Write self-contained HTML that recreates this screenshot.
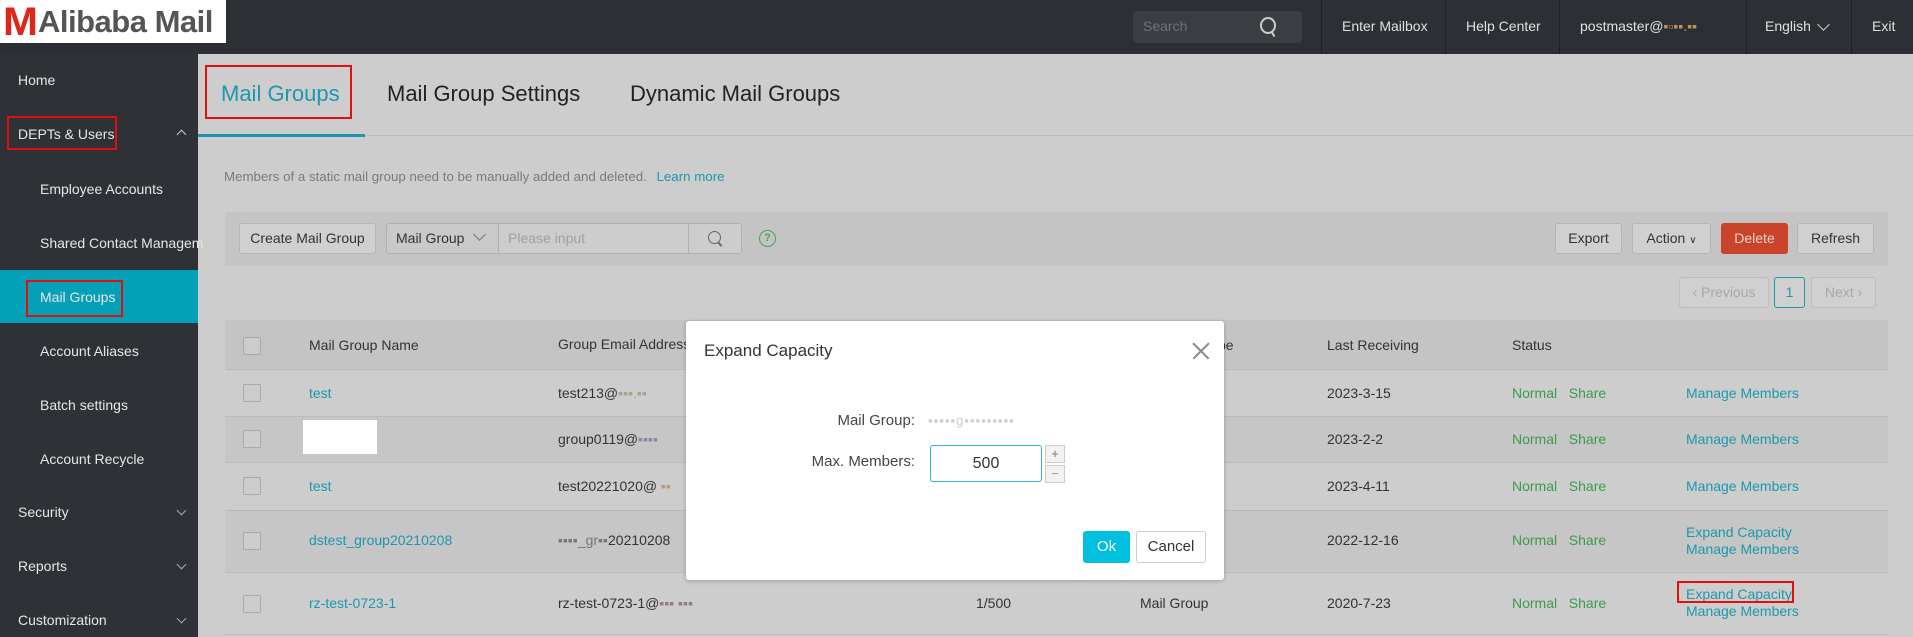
<!DOCTYPE html>
<html><head><meta charset="utf-8"><style>
*{margin:0;padding:0;box-sizing:border-box}
body{width:1913px;height:637px;overflow:hidden;background:#cdcdcd;font-family:"Liberation Sans",Arial,sans-serif;position:relative;color:#333}
.a{position:absolute;white-space:nowrap}
.hdr{left:0;top:0;width:1913px;height:54px;background:#2c3034}
.side{left:0;top:54px;width:198px;height:583px;background:#2e3236}
.nav{color:#e6e6e6;font-size:14px}
.hn{color:#e0e0e0;font-size:14px;top:18px}
.sep{top:0;width:1px;height:54px;background:#1e2124}
.btn{border:1px solid #b4b4b4;background:#d0d0d0;border-radius:3px;font-size:14px;color:#333;text-align:center;line-height:29px;height:31px}
.cb{width:18px;height:18px;border:1px solid #a8a8a8;border-radius:2px;background:#cdcdcd}
.lk{color:#1b98ad;font-size:14px}
.gr{color:#3d9a4a;font-size:14px}
.tx{font-size:14px;color:#333}
.red{border:2px solid #e01010}
</style></head><body>
<div class="a hdr"></div>
<div class="a" style="left:0;top:0;width:226px;height:43px;background:#fff"></div>
<div class="a" style="left:3px;top:0px;font:bold 40px 'Liberation Sans',sans-serif;color:#e0261c;transform:scaleX(1.05);transform-origin:left">M</div>
<div class="a" style="left:38px;top:4px;font:bold 31px 'Liberation Sans',sans-serif;color:#555;letter-spacing:-0.5px">Alibaba Mail</div>
<div class="a" style="left:1133px;top:11px;width:169px;height:32px;background:#3a3e43;border-radius:4px"></div>
<div class="a" style="left:1143px;top:18px;font-size:14px;color:#6d7277">Search</div>
<div class="a" style="left:1260px;top:17px;width:16px;height:17px;border:2px solid #ccc;border-radius:50%"></div>
<div class="a" style="left:1272px;top:31px;width:2px;height:6px;background:#ccc;transform:rotate(-30deg)"></div>
<div class="a sep" style="left:1321px"></div><div class="a sep" style="left:1445px"></div><div class="a sep" style="left:1559px"></div><div class="a sep" style="left:1746px"></div><div class="a sep" style="left:1851px"></div>
<div class="a hn" style="left:1342px">Enter Mailbox</div>
<div class="a hn" style="left:1466px">Help Center</div>
<div class="a hn" style="left:1580px">postmaster@<span style="color:#b89560">▪▫▪▪.▪▪</span></div>
<div class="a hn" style="left:1765px">English</div>
<div class="a" style="left:1819px;top:20px;width:9px;height:9px;border-right:1.5px solid #ccc;border-bottom:1.5px solid #ccc;transform:rotate(45deg)"></div>
<div class="a hn" style="left:1872px">Exit</div>

<div class="a side"></div>
<div class="a" style="left:0;top:270px;width:198px;height:53px;background:#04a0b7"></div>
<div class="a nav" style="left:18px;top:72px">Home</div>
<div class="a nav" style="left:18px;top:126px">DEPTs &amp; Users</div>
<div class="a red" style="left:7px;top:116px;width:110px;height:34px"></div>
<div class="a" style="left:178px;top:131px;width:7px;height:7px;border-left:1.5px solid #ccc;border-top:1.5px solid #ccc;transform:rotate(45deg)"></div>
<div class="a nav" style="left:40px;top:181px">Employee Accounts</div>
<div class="a nav" style="left:40px;top:235px">Shared Contact Managem</div>
<div class="a nav" style="left:40px;top:289px">Mail Groups</div>
<div class="a red" style="left:26px;top:280px;width:97px;height:37px"></div>
<div class="a nav" style="left:40px;top:343px">Account Aliases</div>
<div class="a nav" style="left:40px;top:397px">Batch settings</div>
<div class="a nav" style="left:40px;top:451px">Account Recycle</div>
<div class="a nav" style="left:18px;top:504px">Security</div>
<div class="a nav" style="left:18px;top:558px">Reports</div>
<div class="a nav" style="left:18px;top:612px">Customization</div>
<div class="a" style="left:178px;top:507px;width:7px;height:7px;border-right:1.5px solid #aaa;border-bottom:1.5px solid #aaa;transform:rotate(45deg)"></div>
<div class="a" style="left:178px;top:561px;width:7px;height:7px;border-right:1.5px solid #aaa;border-bottom:1.5px solid #aaa;transform:rotate(45deg)"></div>
<div class="a" style="left:178px;top:615px;width:7px;height:7px;border-right:1.5px solid #aaa;border-bottom:1.5px solid #aaa;transform:rotate(45deg)"></div>

<!-- tabs -->
<div class="a" style="left:198px;top:135px;width:1715px;height:1px;background:#bdbdbd"></div>
<div class="a" style="left:198px;top:134px;width:167px;height:3px;background:#1b98ad"></div>
<div class="a" style="left:221px;top:81px;font-size:22px;color:#1b98ad">Mail Groups</div>
<div class="a red" style="left:205px;top:65px;width:147px;height:54px"></div>
<div class="a" style="left:387px;top:81px;font-size:22px;color:#222">Mail Group Settings</div>
<div class="a" style="left:630px;top:81px;font-size:22px;color:#222">Dynamic Mail Groups</div>
<div class="a" style="left:224px;top:169px;font-size:13.3px;color:#7a7a7a">Members of a static mail group need to be manually added and deleted. <span style="color:#1b98ad;margin-left:6px">Learn more</span></div>

<!-- toolbar -->
<div class="a" style="left:225px;top:212px;width:1663px;height:54px;background:#c4c4c4"></div>
<div class="a btn" style="left:239px;top:223px;width:137px">Create Mail Group</div>
<div class="a" style="left:386px;top:223px;width:356px;height:31px;border:1px solid #b0b0b0;border-radius:3px;background:#cdcdcd"></div>
<div class="a" style="left:386px;top:223px;width:113px;height:31px;border:1px solid #b0b0b0;border-radius:3px 0 0 3px;background:#c9c9c9"></div>
<div class="a tx" style="left:396px;top:230px">Mail Group</div>
<div class="a" style="left:475px;top:230px;width:9px;height:9px;border-right:1.5px solid #777;border-bottom:1.5px solid #777;transform:rotate(45deg)"></div>
<div class="a" style="left:508px;top:230px;font-size:14px;color:#a0a0a0">Please input</div>
<div class="a" style="left:688px;top:223px;width:1px;height:31px;background:#b0b0b0"></div>
<div class="a" style="left:708px;top:231px;width:13px;height:13px;border:1.5px solid #666;border-radius:50%"></div>
<div class="a" style="left:719px;top:242px;width:1.5px;height:5px;background:#666;transform:rotate(-45deg)"></div>
<div class="a" style="left:759px;top:230px;width:17px;height:17px;border:1.5px solid #4aa25a;border-radius:50%;font-size:11px;color:#4aa25a;text-align:center;line-height:14px;font-weight:bold">?</div>
<div class="a btn" style="left:1555px;top:223px;width:67px">Export</div>
<div class="a btn" style="left:1632px;top:223px;width:79px">Action <span style="font-size:10px">∨</span></div>
<div class="a btn" style="left:1721px;top:223px;width:67px;background:#c9442b;border-color:#c9442b;color:#f0d0c8">Delete</div>
<div class="a btn" style="left:1797px;top:223px;width:77px">Refresh</div>
<div class="a btn" style="left:1679px;top:277px;width:90px;color:#a8a8a8;border-color:#bdbdbd">‹ Previous</div>
<div class="a btn" style="left:1774px;top:277px;width:31px;border-color:#1b98ad;color:#1b98ad">1</div>
<div class="a btn" style="left:1811px;top:277px;width:65px;color:#a8a8a8;border-color:#bdbdbd">Next ›</div>

<!-- table -->
<div class="a" style="left:225px;top:320px;width:1663px;height:50px;background:#c4c4c4;border-bottom:1px solid #bababa"></div>
<div class="a" style="left:225px;top:416px;width:1663px;height:47px;background:#c6c6c6;border-top:1px solid #bababa;border-bottom:1px solid #bababa"></div>
<div class="a" style="left:225px;top:510px;width:1663px;height:63px;background:#c6c6c6;border-top:1px solid #bababa;border-bottom:1px solid #bababa"></div>
<div class="a" style="left:225px;top:634px;width:1663px;height:1px;background:#bababa"></div>
<div class="a cb" style="left:243px;top:337px"></div>
<div class="a cb" style="left:243px;top:384px"></div>
<div class="a cb" style="left:243px;top:430px"></div>
<div class="a cb" style="left:243px;top:477px"></div>
<div class="a cb" style="left:243px;top:532px"></div>
<div class="a cb" style="left:243px;top:595px"></div>
<div class="a tx" style="left:309px;top:337px">Mail Group Name</div>
<div class="a tx" style="left:558px;top:336px">Group Email Address</div>
<div class="a tx" style="left:1327px;top:337px">Last Receiving</div>
<div class="a tx" style="left:1512px;top:337px">Status</div>
<div class="a tx" style="left:1218px;top:337px">pe</div>
<div class="a lk" style="left:309px;top:385px">test</div>
<div class="a" style="left:303px;top:420px;width:74px;height:34px;background:#fff"></div>
<div class="a lk" style="left:309px;top:478px">test</div>
<div class="a lk" style="left:309px;top:532px">dstest_group20210208</div>
<div class="a lk" style="left:309px;top:595px">rz-test-0723-1</div>
<div class="a tx" style="left:558px;top:385px">test213@<span style="color:#9a8">▪▪▪.▪▪</span></div>
<div class="a tx" style="left:558px;top:431px">group0119@<span style="color:#889">▪▪▪▪</span></div>
<div class="a tx" style="left:558px;top:478px">test20221020@ <span style="color:#b97">▪▪</span></div>
<div class="a tx" style="left:558px;top:532px"><span style="color:#777">▪▪▪▪_gr▪▪</span>20210208</div>
<div class="a tx" style="left:558px;top:595px">rz-test-0723-1@<span style="color:#978">▪▪▪ ▪▪▪</span></div>
<div class="a tx" style="left:976px;top:595px">1/500</div>
<div class="a tx" style="left:1140px;top:595px">Mail Group</div>
<div class="a tx" style="left:1327px;top:385px">2023-3-15</div>
<div class="a tx" style="left:1327px;top:431px">2023-2-2</div>
<div class="a tx" style="left:1327px;top:478px">2023-4-11</div>
<div class="a tx" style="left:1327px;top:532px">2022-12-16</div>
<div class="a tx" style="left:1327px;top:595px">2020-7-23</div>
<div class="a gr" style="left:1512px;top:385px">Normal &nbsp;&nbsp;Share</div>
<div class="a gr" style="left:1512px;top:431px">Normal &nbsp;&nbsp;Share</div>
<div class="a gr" style="left:1512px;top:478px">Normal &nbsp;&nbsp;Share</div>
<div class="a gr" style="left:1512px;top:532px">Normal &nbsp;&nbsp;Share</div>
<div class="a gr" style="left:1512px;top:595px">Normal &nbsp;&nbsp;Share</div>
<div class="a lk" style="left:1686px;top:385px">Manage Members</div>
<div class="a lk" style="left:1686px;top:431px">Manage Members</div>
<div class="a lk" style="left:1686px;top:478px">Manage Members</div>
<div class="a lk" style="left:1686px;top:524px;line-height:17px">Expand Capacity<br>Manage Members</div>
<div class="a lk" style="left:1686px;top:586px;line-height:17px">Expand Capacity<br>Manage Members</div>
<div class="a red" style="left:1677px;top:581px;width:117px;height:22px"></div>

<!-- modal -->
<div class="a" style="left:686px;top:321px;width:538px;height:259px;background:#fff;border-radius:3px;box-shadow:0 1px 4px rgba(0,0,0,.25)"></div>
<div class="a" style="left:704px;top:341px;font-size:17px;color:#333">Expand Capacity</div>
<div class="a" style="left:1190px;top:350px;width:22px;height:1.5px;background:#888;transform:rotate(45deg)"></div>
<div class="a" style="left:1190px;top:350px;width:22px;height:1.5px;background:#888;transform:rotate(-45deg)"></div>
<div class="a" style="left:780px;top:412px;width:135px;text-align:right;font-size:15px;color:#444">Mail Group:</div>
<div class="a" style="left:928px;top:413px;font-size:13px;color:#ccc;letter-spacing:1px">▪▪▪▪▪g▪▪▪▪▪▪▪▪▪</div>
<div class="a" style="left:780px;top:453px;width:135px;text-align:right;font-size:15px;color:#444">Max. Members:</div>
<div class="a" style="left:930px;top:445px;width:112px;height:37px;border:1px solid #2bb7d0;border-radius:3px;text-align:center;line-height:35px;font-size:16px;color:#333">500</div>
<div class="a" style="left:1045px;top:445px;width:20px;height:18px;border:1px solid #ccc;background:#f2f2f2;font-size:13px;color:#777;text-align:center;line-height:16px">+</div>
<div class="a" style="left:1045px;top:465px;width:20px;height:18px;border:1px solid #ccc;background:#f2f2f2;font-size:13px;color:#999;text-align:center;line-height:16px">−</div>
<div class="a" style="left:1083px;top:531px;width:47px;height:32px;background:#00bfdf;border-radius:3px;color:#fff;font-size:15px;text-align:center;line-height:32px">Ok</div>
<div class="a" style="left:1136px;top:531px;width:70px;height:32px;border:1px solid #ccc;border-radius:3px;color:#333;font-size:15px;text-align:center;line-height:30px">Cancel</div>
</body></html>
